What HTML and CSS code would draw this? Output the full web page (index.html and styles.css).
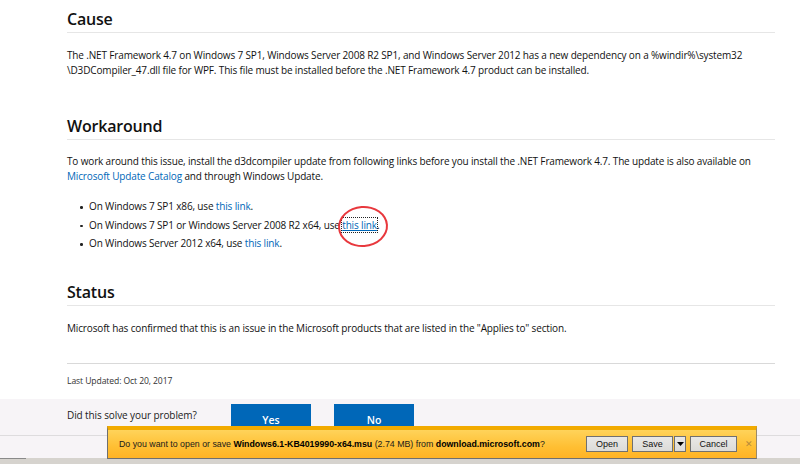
FILE: index.html
```html
<!DOCTYPE html>
<html>
<head>
<meta charset="utf-8">
<link rel="stylesheet" href="styles.css">
</head>
<body>
<div class="page">
  <section class="sec sec-cause">
    <h2>Cause</h2>
    <p>The .NET Framework 4.7 on Windows 7 SP1, Windows Server 2008 R2 SP1, and Windows Server 2012 has a new dependency on a %windir%\system32<wbr>\D3DCompiler_47.dll file for WPF. This file must be installed before the .NET Framework 4.7 product can be installed.</p>
  </section>
  <section class="sec sec-work">
    <h2>Workaround</h2>
    <p>To work around this issue, install the d3dcompiler update from following links before you install the .NET Framework 4.7. The update is also available on <a href="#">Microsoft Update Catalog</a> and through Windows Update.</p>
    <ul>
      <li>On Windows 7 SP1 x86, use <a href="#">this link</a>.</li>
      <li>On Windows 7 SP1 or Windows Server 2008 R2 x64, use <span class="mark"><a href="#" class="focus">this link</a><span class="ring"></span></span>.</li>
      <li>On Windows Server 2012 x64, use <a href="#">this link</a>.</li>
    </ul>
  </section>
  <section class="sec sec-status">
    <h2>Status</h2>
    <p>Microsoft has confirmed that this is an issue in the Microsoft products that are listed in the "Applies to" section.</p>
  </section>
  <div class="updated">Last Updated: Oct 20, 2017</div>
</div>
<div class="feedback">
  <div class="fb-row">
    <span class="fb-q">Did this solve your problem?</span>
    <button class="fb-btn">Yes</button>
    <button class="fb-btn">No</button>
  </div>
</div>
<div class="statusbar"><span class="sb-tab"></span></div>
<div class="notify">
  <div class="nt-body">
    <span class="nt-text">Do you want to open or save <b>Windows6.1-KB4019990-x64.msu</b> (2.74 MB) from <b>download.microsoft.com</b>?</span>
    <span class="nt-btns">
      <span class="nt-btn nt-open">Open</span>
      <span class="nt-split"><span class="nt-btn nt-save">Save</span><span class="nt-btn nt-drop"><svg width="7" height="4" viewBox="0 0 7 4"><path d="M0 0h7L3.5 4z" fill="#000"/></svg></span></span>
      <span class="nt-btn nt-cancel">Cancel</span>
    </span>
    <span class="nt-close">&#x2715;</span>
  </div>
</div>
</body>
</html>
```

FILE: styles.css
```css
html, body {
  margin: 0;
  padding: 0;
  background: #fff;
  width: 800px;
  height: 465px;
  overflow: hidden;
  position: relative;
}
body {
  font-family: "Open Sans", "Noto Sans", sans-serif;
  color: #111;
}
.page {
  padding-left: 67px;
  width: 708px;
}
.sec h2 {
  margin: 0;
  font-size: 16px;
  letter-spacing: -0.2px;
  font-weight: 600;
  line-height: 21px;
  padding-bottom: 2px;
  border-bottom: 1px solid #e6e6e6;
  color: #111;
}
.sec p {
  margin: 0;
  font-size: 10px;
  letter-spacing: -0.15px;
  line-height: 15px;
}
.sec-cause { padding-top: 9px; }
.sec-cause p { margin-top: 15px; }
.sec-work { margin-top: 38px; }
.sec-work p { margin-top: 14px; }
.sec-status { margin-top: 31px; }
.sec-status p { margin-top: 15px; }
a {
  color: #0067b8;
  text-decoration: none;
}
ul {
  margin: 15px 0 0 0;
  padding-left: 22px;
  font-size: 10px;
  letter-spacing: -0.15px;
  line-height: 15px;
  list-style: none;
}
li {
  margin-bottom: 3.5px;
  position: relative;
}
li::before {
  content: "";
  position: absolute;
  left: -9px;
  top: 7px;
  width: 2.5px;
  height: 2.5px;
  border-radius: 50%;
  background: #222;
}
.mark {
  position: relative;
  display: inline-block;
}
.focus {
  text-decoration: underline;
  outline: 1px dotted #222;
  outline-offset: 0;
}
.ring {
  position: absolute;
  left: -4px;
  top: -12px;
  width: 46px;
  height: 37px;
  border: 2px solid #e8383d;
  border-radius: 50%;
  transform: rotate(-4deg);
}
.updated {
  margin-top: 27px;
  border-top: 1px solid #d9d9d9;
  padding-top: 10px;
  font-size: 8.6px;
  letter-spacing: -0.1px;
  line-height: 14px;
  color: #333;
  height: 25px;
}
.feedback {
  background: #f7f4f7;
  height: 59px;
  box-sizing: border-box;
  padding-top: 5px;
}
.fb-row {
  display: flex;
  align-items: flex-start;
  height: 31px;
  padding-left: 67px;
  border-bottom: 1px solid #dedcde;
}
.fb-q {
  width: 164px;
  font-size: 10px;
  letter-spacing: -0.1px;
  line-height: 15px;
  padding-top: 4px;
  color: #222;
}
.fb-btn {
  width: 80px;
  height: 31px;
  margin: 0 23px 0 0;
  padding: 0;
  border: none;
  background: #0067b8;
  color: #fff;
  font-family: "Open Sans", sans-serif;
  font-size: 10.5px;
  font-weight: 600;
  line-height: 26px;
  display: block;
  text-align: center;
}
.statusbar {
  height: 6px;
  background: #d6d3ce;
  position: relative;
}
.sb-tab {
  position: absolute;
  left: 0;
  top: 0;
  width: 26px;
  height: 1px;
  background: #8a8a8a;
}
.notify {
  position: absolute;
  left: 107px;
  top: 426px;
  width: 650px;
  height: 33px;
  box-sizing: border-box;
  border-left: 1px solid #6f6f6f;
  border-right: 1px solid #9a8a6a;
  border-bottom: 1px solid #6f6f6f;
  border-top: 4px solid #f2ab00;
  background: linear-gradient(#ffd35a, #ffbf33 60%, #ffb325);
  font-family: "Liberation Sans", Arial, sans-serif;
}
.nt-body {
  display: flex;
  align-items: center;
  height: 28px;
  padding-left: 11px;
}
.nt-text {
  font-size: 8.8px;
  color: #1a1a1a;
  width: 467px;
  white-space: nowrap;
}
.nt-text b { font-weight: bold; color: #000; }
.nt-btns {
  display: flex;
  align-items: center;
}
.nt-btn {
  box-sizing: border-box;
  height: 16px;
  background: linear-gradient(#e9e8e6, #dcdbd8);
  border: 1px solid #707070;
  font-size: 9px;
  line-height: 14px;
  color: #111;
  text-align: center;
  display: block;
}
.nt-open { width: 42px; }
.nt-split { display: flex; margin-left: 4px; }
.nt-save { width: 41px; }
.nt-drop {
  width: 12px;
  margin-left: 1px;
  display: flex;
  align-items: center;
  justify-content: center;
}
.nt-cancel { width: 47px; margin-left: 4px; }
.nt-close {
  margin-left: 8px;
  font-size: 9px;
  color: #b88a3a;
  font-family: "DejaVu Sans", sans-serif;
}
```
